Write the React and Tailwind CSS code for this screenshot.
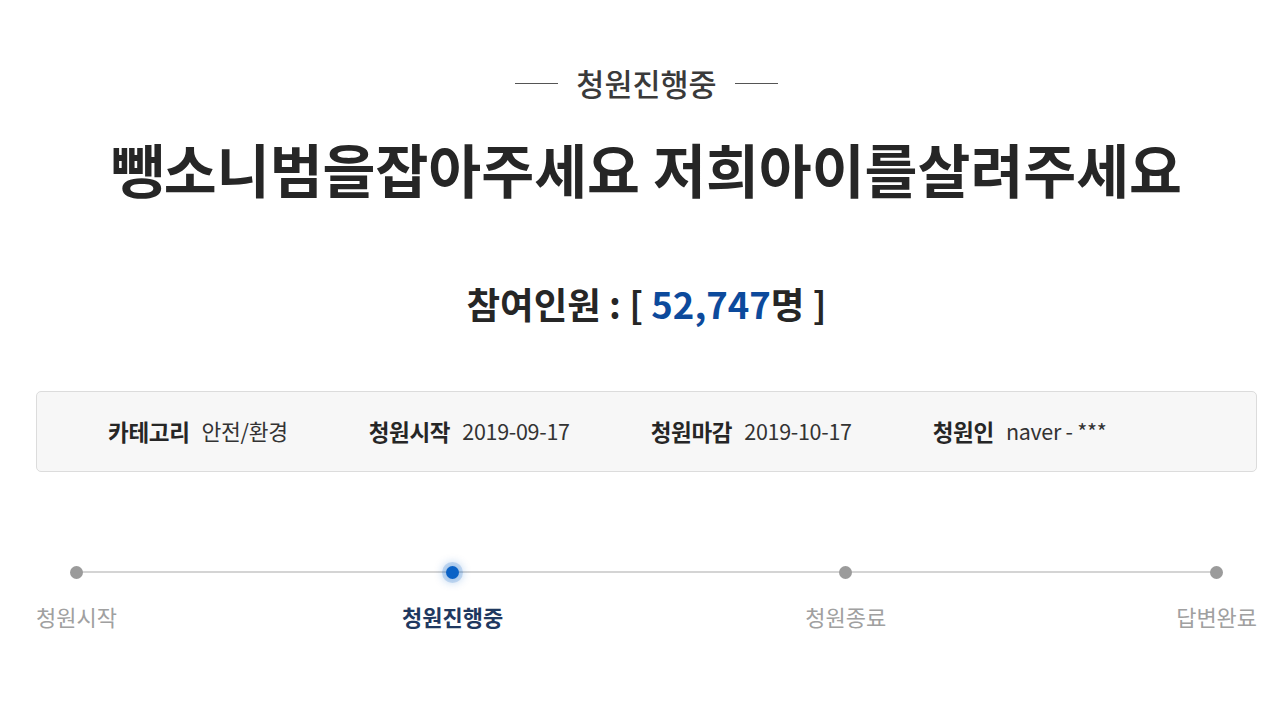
export default function App() {
  const font = { fontFamily: '"Noto Sans CJK KR", "Noto Sans", sans-serif' };
  const info = [
    ["카테고리", "안전/환경"],
    ["청원시작", "2019-09-17"],
    ["청원마감", "2019-10-17"],
    ["청원인", "naver - ***"],
  ];
  const steps = [
    { label: "청원시작", active: false, ml: "ml-0" },
    { label: "청원진행중", active: true, ml: "ml-[285px]" },
    { label: "청원종료", active: false, ml: "ml-[302px]" },
    { label: "답변완료", active: false, ml: "ml-[290px]" },
  ];
  return (
    <div className="w-[1280px] h-[720px] bg-white overflow-hidden" style={font}>
      <div className="ml-[36px] w-[1221px] flex flex-col items-center">
        <div className="mt-[68px] flex items-center gap-[18px]">
          <div className="w-[43px] h-px bg-[#555]" />
          <div className="text-[30.5px] leading-none font-medium text-[#3a3a3a]">청원진행중</div>
          <div className="w-[43px] h-px bg-[#555]" />
        </div>
        <h1 className="mt-[41px] text-[57.5px] leading-none font-bold text-[#262626] whitespace-nowrap">
          뺑소니범을잡아주세요 저희아이를살려주세요
        </h1>
        <div className="mt-[89px] text-[36.5px] leading-none font-bold text-[#262626] whitespace-nowrap">
          참여인원 : [ <span className="text-[#0c4a9c]">52,747</span>명 ]
        </div>
      </div>
      <div className="ml-[36px] w-[1221px] mt-[68px] h-[81px] rounded-[5px] border border-[#dcdcdc] bg-[#f7f7f7] flex items-center pl-[71px] gap-[81px]">
        {info.map(([k, v]) => (
          <div key={k} className="flex items-center gap-[12px] leading-none tracking-[-0.3px] whitespace-nowrap">
            <span className="text-[22.5px] font-bold text-[#262626]">{k}</span>
            <span className="text-[21.5px] text-[#333]">{v}</span>
          </div>
        ))}
      </div>
      <div className="ml-[36px] w-[1221px] mt-[94px] relative flex">
        <div className="absolute left-[38px] right-[41px] top-[5px] h-[2px] bg-[#d4d4d4]" />
        {steps.map((s) => (
          <div key={s.label} className={"relative flex flex-col items-center " + s.ml}>
            {s.active ? (
              <div className="w-[13px] h-[13px] rounded-full bg-[#0a62c6] shadow-[0_0_0_4px_rgba(10,98,198,0.18),0_0_8px_4px_rgba(10,98,198,0.25)]" />
            ) : (
              <div className="w-[13px] h-[13px] rounded-full bg-[#9b9b9b]" />
            )}
            <div
              className={
                "mt-[26px] text-[22px] leading-none whitespace-nowrap " +
                (s.active ? "font-bold text-[#1f3860]" : "text-[#a0a0a0]")
              }
            >
              {s.label}
            </div>
          </div>
        ))}
      </div>
    </div>
  );
}
